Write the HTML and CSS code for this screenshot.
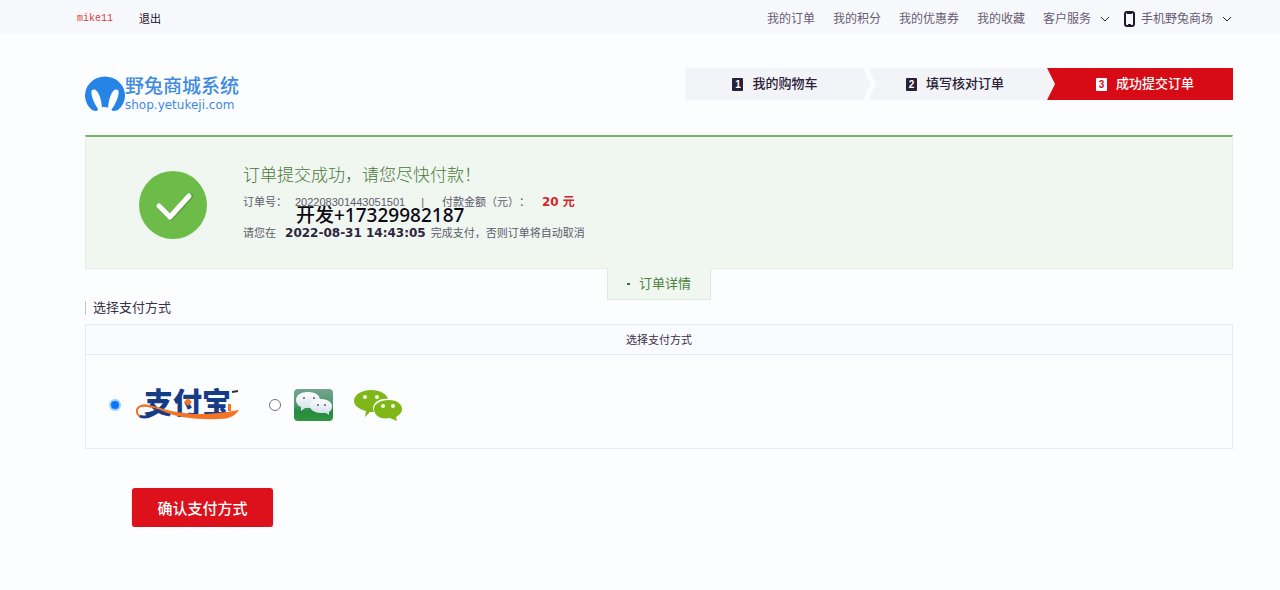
FILE: index.html
```html
<!DOCTYPE html>
<html lang="zh-CN">
  <head>
    <meta charset="UTF-8" />
    <meta name="viewport" content="width=device-width, initial-scale=1" />
    <title>选择支付方式 - 野兔商城系统</title>
    <link rel="stylesheet" href="styles.css">
  </head>

  <body>
    <!-- Top bar -->
    <div class="topbar">
      <div class="user">
        <a href="#" class="user-name">mike11</a>
        <a href="#" class="logout">退出</a>
      </div>
      <nav class="top-links">
        <a href="#">我的订单</a>
        <a href="#">我的积分</a>
        <a href="#">我的优惠券</a>
        <a href="#">我的收藏</a>
        <a href="#" class="has-menu">客户服务
          <svg class="chevron" viewBox="0 0 10 6"><path d="M1 1l4 4 4-4" /></svg>
        </a>
        <a href="#" class="has-menu mobile">
          <svg class="phone" viewBox="0 0 11 16"><rect x="1" y="1" width="9" height="14" rx="2" /><path d="M3 2h5M4 14h3" /></svg>
          <span>手机野兔商场</span>
          <svg class="chevron" viewBox="0 0 10 6"><path d="M1 1l4 4 4-4" /></svg>
        </a>
      </nav>
    </div>

    <!-- Logo and checkout steps -->
    <header class="header">
      <a href="#" class="logo">
        <svg class="logo-mark" viewBox="0 0 40 38">
          <path class="disc" d="M7 35A20 19 0 1 1 33 35Q31 36 28 36H12Q9 36 7 35Z" />
          <path class="ear" d="M14 35C8 28 5 17 7 15C12 12 16 21 17 33Z" />
          <path class="ear" d="M26 35C32 28 35 17 33 15C28 12 24 21 23 33Z" />
          <path class="ear" d="M11 38Q13 31 20 32T29 38Z" />
        </svg>
        <span class="logo-text">
          <span class="logo-name">野兔商城系统</span>
          <span class="logo-url">shop.yetukeji.com</span>
        </span>
      </a>
      <ol class="steps">
        <li class="step first"><span class="num">1</span>我的购物车</li>
        <li class="step middle"><span class="num">2</span>填写核对订单</li>
        <li class="step current"><span class="num">3</span>成功提交订单</li>
      </ol>
    </header>

    <main class="content">
      <!-- Order result -->
      <section class="result">
        <svg class="ok" viewBox="0 0 70 70">
          <circle cx="35" cy="35" r="34" />
          <path class="shade" d="M22 38l11 10 20-22" />
          <path class="tick" d="M21 36l11 11 19-21" />
        </svg>
        <div class="result-text">
          <h1>订单提交成功，请您尽快付款！</h1>
          <p class="order-line">
            <span>订单号：</span>
            <span class="order-no">202208301443051501</span>
            <span class="bar">|</span>
            <span>付款金额（元）：</span>
            <strong class="price">20 元</strong>
          </p>
          <p class="order-line due">请您在 <strong class="date">2022-08-31 14:43:05</strong> 完成支付，否则订单将自动取消</p>
          <span class="contact">开发+17329982187</span>
        </div>
        <a href="#" class="detail"><i class="dot"></i>订单详情</a>
      </section>

      <!-- Payment methods -->
      <form class="pay">
        <h2>选择支付方式</h2>
        <div class="pay-box">
          <div class="pay-head">选择支付方式</div>
          <div class="pay-list">
            <input type="radio" name="pay" id="alipay" checked />
            <label for="alipay" class="alipay-label" aria-label="支付宝">
              <svg class="alipay" viewBox="0 -6 112 54">
                <text x="13" y="30">支付宝</text>
                <path class="loop" d="M20 23C12 19 5 23 6 28C6 31 9 33 12 33" />
                <path class="loop-end" d="M33 20C28 28 17 36 9 32" />
                <path class="swoosh" d="M10 22C20 19 32 26 46 28C62 31 82 31 108 26C104 32 98 35 88 35C65 36 45 33 34 28C25 24 18 22 10 23Z" />
                <path class="spark" d="M57 14l4 4-4 4-4-4zM97 20h3v7h-3z" />
                <path class="mark" d="M101 8l6-1" />
              </svg>
            </label>
            <input type="radio" name="pay" id="wechat" />
            <label for="wechat" class="wechat-label" aria-label="微信支付">
              <svg class="wechat-app" viewBox="0 0 40 32">
                <defs>
                  <linearGradient id="app-bg" x1="0" y1="0" x2="0" y2="1">
                    <stop offset="0" stop-color="#73a58e" />
                    <stop offset="0.5" stop-color="#4e9672" />
                    <stop offset="0.7" stop-color="#278b3d" />
                    <stop offset="1" stop-color="#329443" />
                  </linearGradient>
                  <linearGradient id="bubble" x1="0" y1="0" x2="0" y2="1">
                    <stop offset="0" stop-color="#ffffff" />
                    <stop offset="1" stop-color="#cfdde8" />
                  </linearGradient>
                </defs>
                <rect width="39" height="32" rx="4" fill="url(#app-bg)" />
                <path d="M14 3c7 0 12 3 12 8s-5 8-12 8l-3 0-4 3 0-4C4 17 2 14 2 11c0-5 5-8 12-8z" fill="url(#bubble)" />
                <path d="M27 10c6 0 11 3 11 7 0 3-1 5-3 6v3l-3-2h-5c-6 0-11-3-11-7s5-7 11-7z" fill="url(#bubble)" />
                <g class="eyes"><circle cx="10" cy="9" r="1" /><circle cx="20" cy="9" r="1" /><circle cx="24" cy="16" r="1" /><circle cx="31" cy="16" r="1" /></g>
              </svg>
              <svg class="wechat" viewBox="0 0 50 32">
                <path d="M18 1C27 1 34 5 35 10C26 9 20 14 20 20L21 23L17 23L12 28L13 22C5 20 1 16 1 12C1 6 8 1 18 1Z" />
                <path d="M36 11C44 11 49 15 49 20C49 24 46 26 43 28L44 32L37 29C27 31 21 26 21 20C21 15 27 11 36 11Z" />
                <g class="holes"><circle cx="12" cy="8" r="2" /><circle cx="24" cy="8" r="2" /><circle cx="30" cy="17" r="2" /><circle cx="40" cy="17" r="2" /></g>
              </svg>
            </label>
          </div>
        </div>
        <button type="button" class="submit">确认支付方式</button>
      </form>
    </main>
  </body>
</html>
```
FILE: styles.css
```css
* {
  box-sizing: border-box;
  margin: 0;
  padding: 0;
}

body {
  font-family: "Liberation Sans", "Noto Sans CJK SC", sans-serif;
  font-size: 12px;
  line-height: 16px;
  text-spacing-trim: space-all;
  color: #3b3048;
  background: #fcfdff;
}

a {
  color: inherit;
  text-decoration: none;
}

svg {
  display: block;
  flex: none;
}

/* Top bar */
.topbar {
  display: flex;
  justify-content: space-between;
  align-items: center;
  height: 33px;
  padding: 4px 48px 0 77px;
  background: #f7f8fb;
}

.user {
  display: flex;
  gap: 26px;
}

.user-name {
  font-family: "Liberation Mono", monospace;
  font-size: 10px;
  color: #dc3c3c;
}

.logout {
  font-size: 11px;
  color: #1c1028;
}

.top-links {
  display: flex;
  gap: 18px;
  color: #675c73;
}

.has-menu {
  display: flex;
  align-items: center;
  gap: 9px;
}

.mobile {
  margin-left: -4px;
}

.mobile span {
  margin-left: -3px;
}

.chevron {
  width: 10px;
  height: 6px;
  fill: none;
  stroke: #2d2435;
}

.phone {
  width: 11px;
  height: 16px;
  fill: none;
  stroke: #21162c;
  stroke-width: 2;
}

/* Header */
.header {
  display: flex;
  justify-content: space-between;
  align-items: flex-start;
  padding: 35px 47px 0 85px;
  height: 102px;
}

.logo {
  display: flex;
  padding-top: 7px;
  color: #3e8ae0;
}

.logo-mark {
  width: 40px;
  height: 38px;
}

.disc {
  fill: #2684e6;
}

.ear {
  fill: #fcfdff;
}

.logo-name,
.logo-url {
  display: block;
}

.logo-name {
  font-size: 19px;
  line-height: 24px;
  font-weight: 500;
}

.logo-url {
  font-family: "DejaVu Sans", sans-serif;
  font-size: 12px;
  line-height: 12px;
}

/* Checkout steps */
.steps {
  display: flex;
  list-style: none;
}

.step {
  display: flex;
  align-items: center;
  justify-content: center;
  gap: 9px;
  width: 186px;
  height: 32px;
  font-size: 13px;
  font-weight: 500;
  color: #2b2038;
  background: #f2f4f7;
}

.first {
  padding-right: 6px;
  clip-path: polygon(0 0, 178px 0, 100% 50%, 178px 100%, 0 100%);
}

.middle {
  margin-left: -3px;
  padding-right: 12px;
  clip-path: polygon(0 0, 178px 0, 100% 50%, 178px 100%, 0 100%, 8px 50%);
}

.current {
  margin-left: -7px;
  padding-left: 10px;
  color: #fff;
  background: #d60b16;
  clip-path: polygon(0 0, 100% 0, 100% 100%, 0 100%, 8px 50%);
}

.num {
  width: 11px;
  height: 13px;
  border-radius: 1px;
  font-size: 10px;
  line-height: 13px;
  font-weight: bold;
  text-align: center;
  color: #fff;
  background: #2b2038;
}

.current .num {
  color: #d60b16;
  background: #fff;
}

.content {
  padding: 0 47px 0 85px;
}

/* Order result */
.result {
  position: relative;
  display: flex;
  gap: 35px;
  height: 134px;
  padding: 33px 52px 0;
  border: 1px solid #e3efe2;
  border-top: 2px solid #76b46b;
  background: #eff7f0;
}

.ok {
  width: 70px;
  height: 70px;
}

.ok circle {
  fill: #6dbb49;
}

.tick,
.shade {
  fill: none;
  stroke: #fff;
  stroke-width: 5;
  stroke-linecap: round;
  stroke-linejoin: round;
}

.shade {
  stroke: #599c3c;
}

.result-text {
  position: relative;
}

h1 {
  font-size: 17px;
  line-height: 20px;
  font-weight: 300;
  margin-top: -4px;
  color: #4c783b;
}

.order-line {
  display: flex;
  align-items: center;
  font-size: 11px;
  margin-top: 8px;
  color: #625a6c;
}

.order-no {
  margin-left: 8px;
}

.bar {
  margin: 0 18px 0 16px;
}

.price {
  margin-left: 12px;
  font-size: 12px;
  font-family: "DejaVu Sans", "Noto Sans CJK SC", sans-serif;
  color: #d8242b;
}

.due {
  margin-top: 15px;
  white-space: pre;
}

.date {
  margin: 0 2px 0 6px;
  font-family: "DejaVu Sans", sans-serif;
  font-size: 12px;
  color: #302440;
}

/* Contact note lies over the order lines */
.contact {
  position: absolute;
  top: 33px;
  left: 53px;
  font-family: "Noto Sans", "Noto Sans CJK SC", sans-serif;
  font-size: 19px;
  line-height: 24px;
  font-weight: 500;
  white-space: nowrap;
  color: #0d0714;
}

/* Tab hanging from the result panel */
.detail {
  position: absolute;
  top: 100%;
  left: 50%;
  display: flex;
  align-items: center;
  justify-content: center;
  gap: 9px;
  width: 104px;
  height: 32px;
  margin-left: -52px;
  font-size: 13px;
  color: #4b803a;
  border: 1px solid #dcebdc;
  border-top: 0;
  background: #eff7f0;
}

.dot {
  width: 3px;
  height: 2px;
  background: #3c7130;
}

/* Payment methods */
h2 {
  margin: 32px 0 9px;
  padding-left: 7px;
  font-size: 13px;
  line-height: 14px;
  font-weight: normal;
  border-left: 1px solid #c4c4cc;
}

.pay-box {
  border: 1px solid #e7eaef;
}

.pay-head {
  height: 30px;
  font-size: 11px;
  line-height: 30px;
  text-align: center;
  border-bottom: 1px solid #e7eaef;
  background: #fafbfe;
}

.pay-list {
  display: flex;
  align-items: center;
  height: 93px;
  padding: 6px 23px 0;
}

.pay-list input {
  appearance: none;
  width: 12px;
  height: 12px;
  border: 1px solid #77727e;
  border-radius: 50%;
  background: #fff;
}

.pay-list input:checked {
  border: 2px solid #9bceff;
  background: #0875ff;
}

.alipay-label {
  margin: 0 26px 0 10px;
}

.alipay {
  width: 112px;
  height: 54px;
}

.alipay text {
  font-family: "Noto Sans CJK SC", sans-serif;
  font-size: 29px;
  font-weight: 900;
  fill: #173c86;
}

.loop,
.loop-end,
.mark {
  fill: none;
  stroke: #ed702b;
  stroke-width: 2;
}

.loop-end {
  stroke: #173c86;
  stroke-width: 3;
}

.mark {
  stroke: #333;
}

.swoosh,
.spark {
  fill: #f37424;
}

.wechat-label {
  display: flex;
  gap: 19px;
  margin-left: 13px;
}

.wechat-app {
  width: 40px;
  height: 32px;
}

.eyes {
  fill: #50617a;
}

.wechat {
  width: 50px;
  height: 32px;
  fill: #7fb719;
}

.holes {
  fill: #f5ffe5;
}

.submit {
  display: block;
  width: 141px;
  height: 39px;
  margin: 39px 0 0 47px;
  border: 0;
  border-radius: 3px;
  font-family: inherit;
  font-size: 15px;
  font-weight: 500;
  color: #fff;
  background: #dc111b;
  box-shadow: 0 1px 2px #eeb7bb;
  cursor: pointer;
}
```
